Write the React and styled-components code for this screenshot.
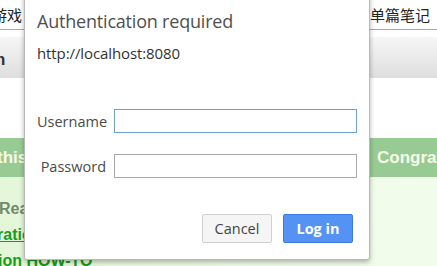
import React from "react";
import styled, { createGlobalStyle } from "styled-components";

const Global = createGlobalStyle`
  html, body { margin: 0; padding: 0; }
  body { width: 437px; height: 266px; overflow: hidden; background: #fff; }
  #root { width: 437px; height: 266px; }
`;

const Page = styled.div`
  position: relative;
  width: 437px;
  height: 266px;
  overflow: hidden;
  display: flex;
  flex-direction: column;
  font-family: "Liberation Sans", Arial, sans-serif;
`;

const TopBar = styled.div`
  height: 29px;
  flex: none;
  border-bottom: 1px solid #a8a8a8;
  display: grid;
  grid-template-columns: 370px 1fr;
  align-items: center;
  font-family: "Noto Sans CJK SC", sans-serif;
  font-size: 15px;
  color: #222;
  overflow: hidden;
`;

const NavItem = styled.span`
  margin-left: ${(p) => p.$offset || 0}px;
  line-height: 29px;
  white-space: nowrap;
`;

const Spacer = styled.div`
  height: ${(p) => p.$h}px;
  flex: none;
`;

const Toolbar = styled.div`
  height: 41px;
  flex: none;
  background: linear-gradient(#f6f6f6, #dedede);
  display: flex;
  align-items: center;
  padding-top: 3px;
  box-sizing: border-box;
  font-weight: bold;
  font-size: 17px;
  color: #333;
`;

const Band = styled.div`
  height: 39px;
  flex: none;
  background: #98cb94;
  display: grid;
  grid-template-columns: 377px 1fr;
  align-items: center;
  color: #f6fbe8;
  font-weight: bold;
  font-size: 17px;
  overflow: hidden;
`;

const BandText = styled.span`
  margin-left: ${(p) => p.$offset || 0}px;
  white-space: nowrap;
`;

const Body = styled.div`
  flex: 1;
  background: linear-gradient(90deg, #e4f6d8, #eefbe6 60%, #f2fcec);
  padding-top: 23px;
  display: flex;
  flex-direction: column;
  gap: 8px;
  font-weight: bold;
  font-size: 16px;
`;

const Lead = styled.div`
  color: #6f8a6c;
  margin-left: -1px;
  line-height: 18px;
`;

const Link = styled.a`
  color: #1b9a1b;
  text-decoration: underline;
  margin-left: ${(p) => p.$offset || 0}px;
  line-height: 18px;
  white-space: nowrap;
`;

const PlainLink = styled(Link)`
  text-decoration: none;
`;

const Dialog = styled.div`
  position: absolute;
  left: 24px;
  top: -6px;
  width: 346px;
  height: 266px;
  box-sizing: border-box;
  background: #fff;
  border: 1px solid #b9b9b9;
  border-radius: 0 0 3px 3px;
  box-shadow: 0 2px 5px rgba(0, 0, 0, 0.3);
  padding: 0 15px 16px 12px;
  display: flex;
  flex-direction: column;
  font-family: "Open Sans", "Noto Sans", sans-serif;
`;

const Title = styled.div`
  margin-top: 14px;
  font-size: 18px;
  letter-spacing: -0.2px;
  line-height: 24px;
  color: #4f4f4f;
`;

const Origin = styled.div`
  margin-top: 11px;
  font-size: 15px;
  letter-spacing: -0.1px;
  line-height: 18px;
  color: #333;
`;

const Form = styled.div`
  margin-top: 47px;
  display: grid;
  grid-template-columns: 69px 243px;
  column-gap: 8px;
  row-gap: 21px;
  align-items: center;
`;

const Label = styled.label`
  font-size: 14.5px;
  color: #4a4a4a;
  text-align: right;
  white-space: nowrap;
`;

const Input = styled.input`
  box-sizing: border-box;
  width: 243px;
  height: 24px;
  margin: 0;
  border: 1px solid ${(p) => (p.$focus ? "#6d9fd6" : "#a9a9a9")};
  background: #fff;
  outline: none;
`;

const Actions = styled.div`
  margin-top: auto;
  display: flex;
  justify-content: flex-end;
  gap: 11px;
  padding-right: 1px;
`;

const Button = styled.button`
  box-sizing: border-box;
  width: 70px;
  height: 29px;
  border-radius: 2px;
  font-family: "Open Sans", "Noto Sans", sans-serif;
  font-size: 14.5px;
  cursor: pointer;
  border: 1px solid ${(p) => (p.$primary ? "#3b7be0" : "#cfcfcf")};
  background: ${(p) => (p.$primary ? "#5492f4" : "#f5f5f5")};
  color: ${(p) => (p.$primary ? "#fff" : "#444")};
  font-weight: ${(p) => (p.$primary ? "bold" : "normal")};
  padding: 0;
`;

export default function App() {
  return (
    <>
      <Global />
      <Page>
        <TopBar>
          <NavItem $offset={-8}>游戏</NavItem>
          <NavItem>单篇笔记</NavItem>
        </TopBar>
        <Spacer $h={7} />
        <Toolbar>
          <NavItem $offset={-5}>n</NavItem>
        </Toolbar>
        <Spacer $h={60} />
        <Band>
          <BandText $offset={-3}>this</BandText>
          <BandText>Congratulations</BandText>
        </Band>
        <Body>
          <Lead>Read</Lead>
          <Link $offset={-3}>ration</Link>
          <PlainLink $offset={-2}>ion HOW-TO</PlainLink>
        </Body>
        <Dialog role="dialog">
          <Title>Authentication required</Title>
          <Origin>http://localhost:8080</Origin>
          <Form>
            <Label htmlFor="u">Username</Label>
            <Input id="u" $focus />
            <Label htmlFor="p">Password</Label>
            <Input id="p" type="password" />
          </Form>
          <Actions>
            <Button>Cancel</Button>
            <Button $primary>Log in</Button>
          </Actions>
        </Dialog>
      </Page>
    </>
  );
}
